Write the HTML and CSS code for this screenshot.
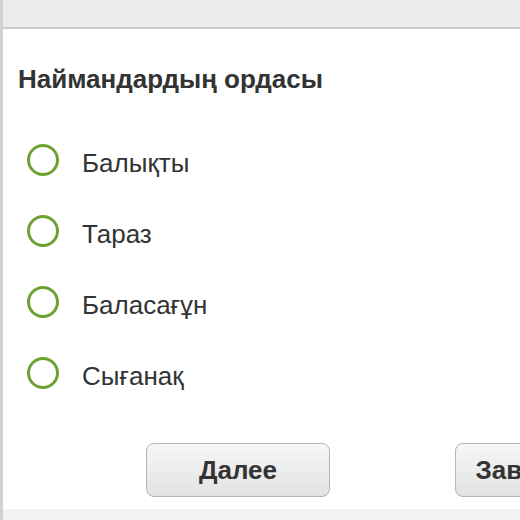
FILE: index.html
```html
<!DOCTYPE html>
<html>
<head>
<meta charset="utf-8">
<link rel="stylesheet" href="styles.css">
</head>
<body>
<div class="page">
  <div class="topbar"></div>
  <div class="content">
    <h1 class="question">Наймандардың ордасы</h1>
    <ul class="options">
      <li class="option"><span class="radio"></span><span class="label">Балықты</span></li>
      <li class="option"><span class="radio"></span><span class="label">Тараз</span></li>
      <li class="option"><span class="radio"></span><span class="label">Баласағұн</span></li>
      <li class="option"><span class="radio"></span><span class="label">Сығанақ</span></li>
    </ul>
    <div class="actions">
      <button class="btn">Далее</button>
      <button class="btn">Завершить</button>
    </div>
  </div>
  <div class="bottombar"></div>
</div>
</body>
</html>
```
FILE: styles.css
```css
html, body {
  margin: 0;
  padding: 0;
  background: #fff;
  overflow: hidden;
}
.page {
  width: 520px;
  height: 520px;
  box-sizing: border-box;
  border-left: 3px solid #d2d2d2;
  display: flex;
  flex-direction: column;
  font-family: "Liberation Sans", Arial, sans-serif;
  color: #333;
  overflow: hidden;
}
.topbar {
  height: 27px;
  flex: none;
  background: #ececec;
  border-bottom: 2px solid #cbcbcb;
}
.content {
  flex: 1;
  padding-left: 15px;
  display: flex;
  flex-direction: column;
}
.question {
  margin: 35px 0 0 0;
  font-size: 26px;
  font-weight: bold;
  line-height: 30px;
}
.options {
  list-style: none;
  margin: 50px 0 0 0;
  padding: 0;
  display: flex;
  flex-direction: column;
  gap: 39px;
}
.option {
  display: flex;
  align-items: center;
  height: 32px;
}
.radio {
  width: 26px;
  height: 26px;
  border: 3.5px solid #6da233;
  border-radius: 50%;
  margin-left: 9px;
  flex: none;
}
.label {
  margin-left: 23px;
  font-size: 26px;
  line-height: 32px;
  position: relative;
  top: 3px;
}
.actions {
  margin-top: 54px;
  display: flex;
  gap: 125px;
  padding-left: 128px;
}
.btn {
  flex: none;
  width: 184px;
  height: 54px;
  border: 1px solid #b5b5b5;
  border-radius: 8px;
  background: linear-gradient(#f7f7f7, #e2e2e2);
  font-family: "Liberation Sans", Arial, sans-serif;
  font-size: 26px;
  font-weight: bold;
  color: #333;
  padding: 0;
  white-space: nowrap;
  overflow: hidden;
}
.bottombar {
  height: 11px;
  flex: none;
  background: #f2f2f2;
}
```
